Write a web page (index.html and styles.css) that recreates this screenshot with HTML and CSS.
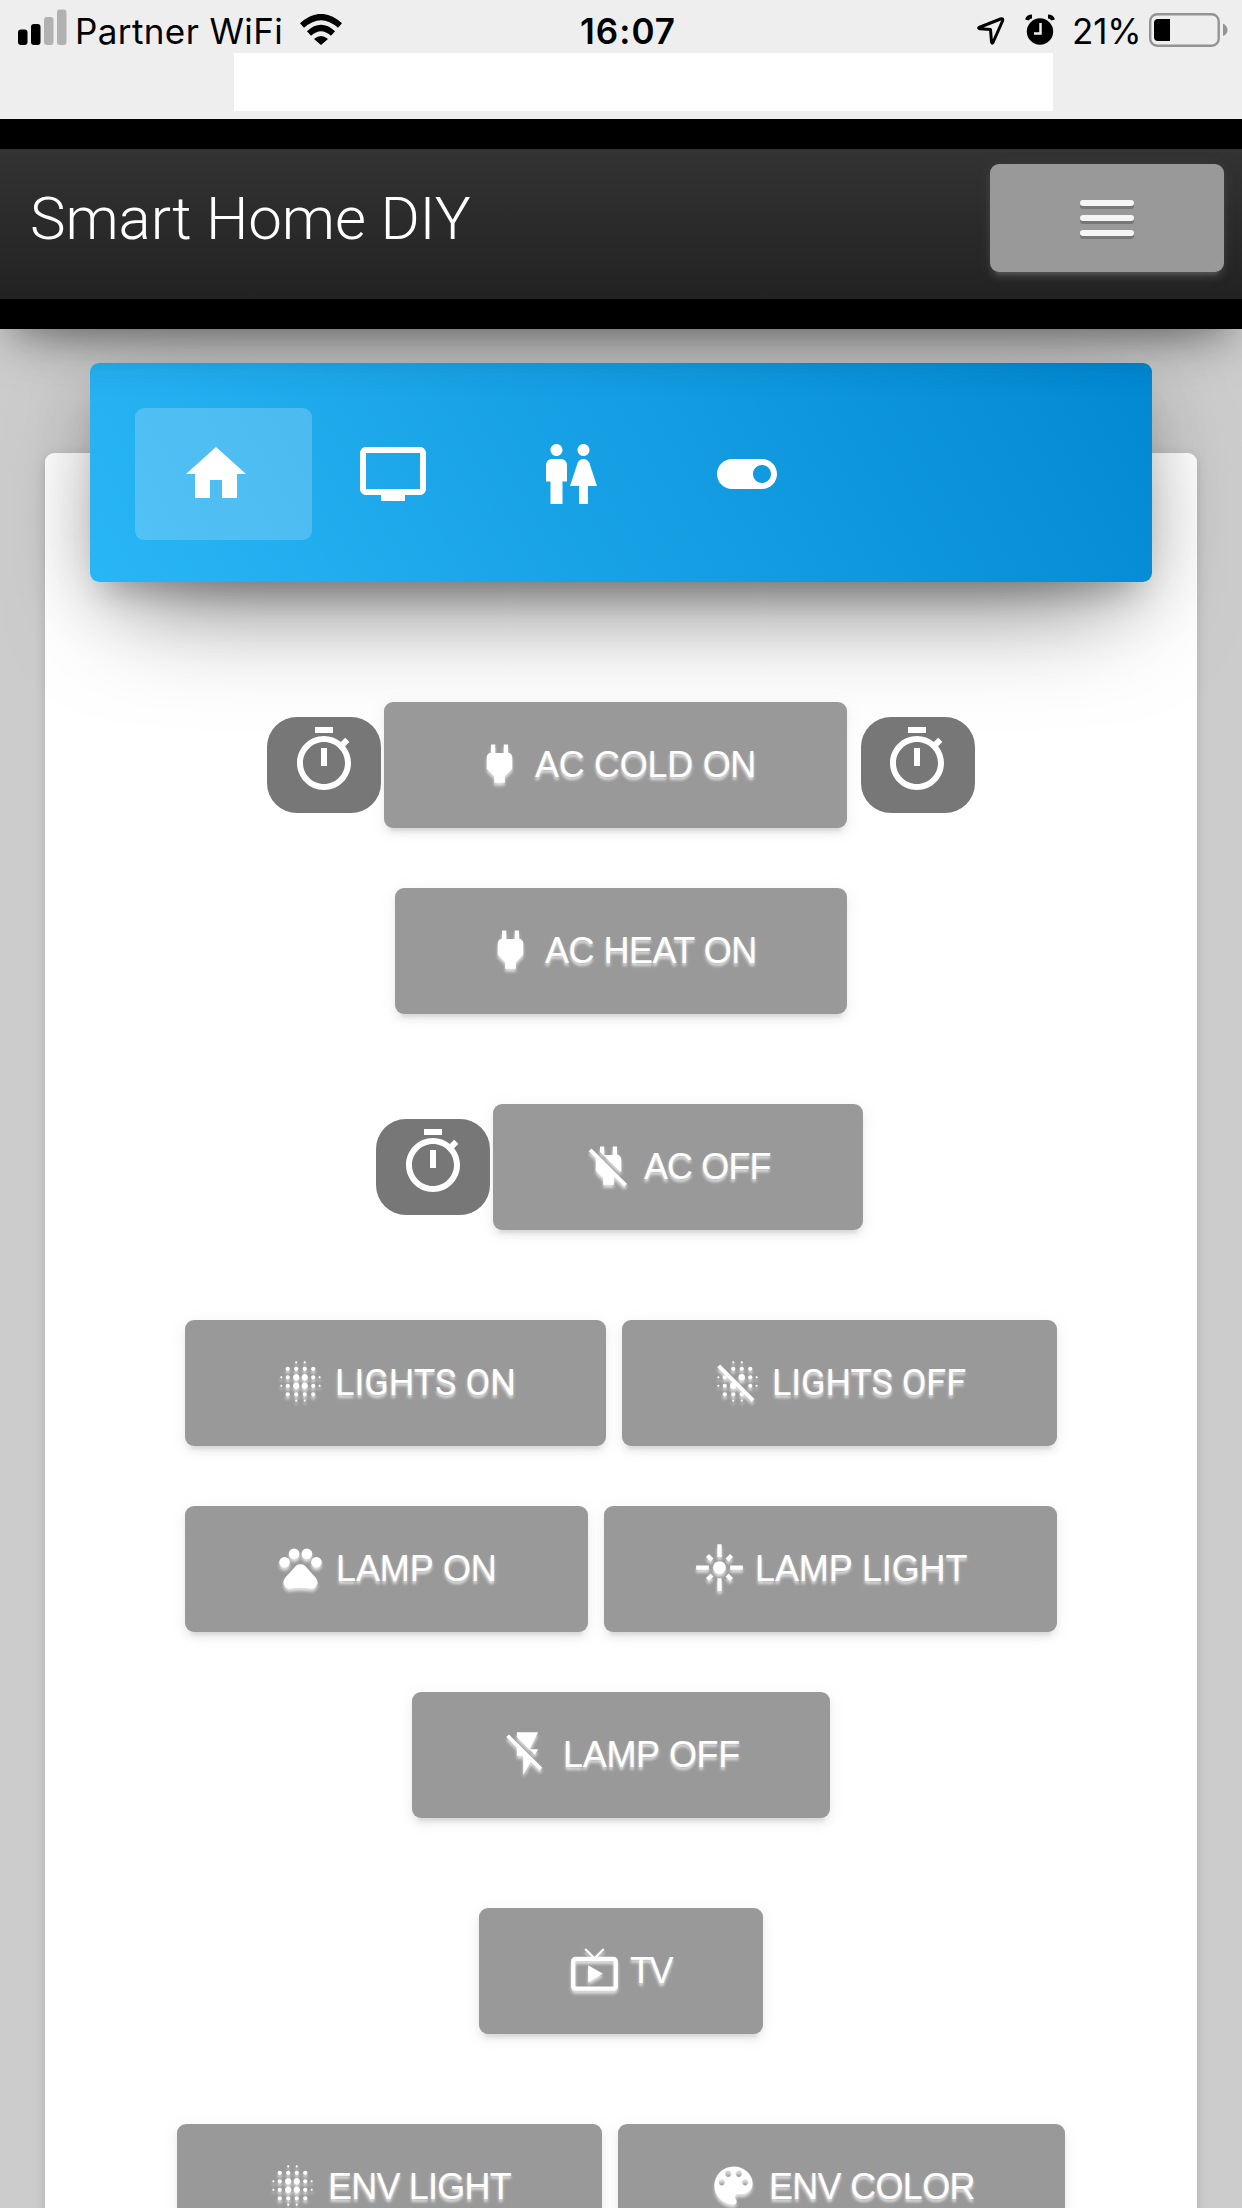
FILE: index.html
```html
<!DOCTYPE html>
<html lang="en">
<head>
<meta charset="utf-8">
<title>Smart Home DIY</title>
<link rel="stylesheet" href="styles.css">
</head>
<body>
<svg class="sprite" width="0" height="0" aria-hidden="true">
  <symbol id="timer" viewBox="0 0 24 24"><path d="M15 1H9v2h6V1zm-4 13h2V8h-2v6zm8.030-6.610l1.420-1.420c-.43-.51-.9-.99-1.410-1.410l-1.420 1.420C16.070 4.740 14.120 4 12 4c-4.970 0-9 4.030-9 9s4.020 9 9 9 9-4.030 9-9c0-2.120-.74-4.070-1.970-5.610zM12 20c-3.870 0-7-3.130-7-7s3.130-7 7-7 7 3.130 7 7-3.130 7-7 7z"/></symbol>
  <symbol id="power" viewBox="0 0 24 24"><path d="M16.010 7L16 3h-2v4h-4V3H8v4h-.01C7 6.990 6 7.990 6 8.990v5.490L9.500 18v3h5v-3l3.500-3.510v-5.500c0-1-1-2-1.990-1.990z"/></symbol>
  <symbol id="power-off" viewBox="0 0 24 24"><path d="M18 14.490V9c0-1-1.010-2.010-2-2V3h-2v4h-4V3H8v2.480l9.510 9.500.49-.49zm-1.760 1.770L7.200 7.200l-.01.010L3.980 4 2.710 5.250l3.360 3.360C6.040 8.740 6 8.870 6 9v5.480L9.500 18v3h5v-3l.48-.48L19.450 22l1.260-1.280-4.470-4.460z"/></symbol>
  <symbol id="blur-on" viewBox="0 0 24 24"><path d="M6 13c-.55 0-1 .45-1 1s.45 1 1 1 1-.45 1-1-.45-1-1-1zm0 4c-.55 0-1 .45-1 1s.45 1 1 1 1-.45 1-1-.45-1-1-1zm0-8c-.55 0-1 .45-1 1s.45 1 1 1 1-.45 1-1-.45-1-1-1zm-3 .5c-.28 0-.5.220-.5.500s.220.500.500.500.500-.22.500-.5-.22-.5-.5-.5zM6 5c-.55 0-1 .45-1 1s.45 1 1 1 1-.45 1-1-.45-1-1-1zm15 5.500c.28 0 .5-.22.500-.5s-.22-.5-.5-.5-.5.220-.5.500.220.500.500.500zM14 7c.55 0 1-.45 1-1s-.45-1-1-1-1 .45-1 1 .45 1 1 1zm0-3.500c.28 0 .5-.22.500-.5s-.22-.5-.5-.5-.5.220-.5.500.220.500.500.500zm-11 10c-.28 0-.5.220-.5.500s.220.500.500.500.500-.22.500-.5-.22-.5-.5-.5zm7 7c-.28 0-.5.220-.5.500s.220.500.500.500.500-.22.500-.5-.22-.5-.5-.5zm0-17c.28 0 .5-.22.500-.5s-.22-.5-.5-.5-.5.220-.5.500.220.500.500.500zM10 7c.55 0 1-.45 1-1s-.45-1-1-1-1 .45-1 1 .45 1 1 1zm0 5.500c-.83 0-1.500.67-1.500 1.500s.67 1.500 1.500 1.500 1.500-.67 1.500-1.500-.67-1.500-1.500-1.500zm8 .5c-.55 0-1 .45-1 1s.45 1 1 1 1-.45 1-1-.45-1-1-1zm0 4c-.55 0-1 .45-1 1s.45 1 1 1 1-.45 1-1-.45-1-1-1zm0-8c-.55 0-1 .45-1 1s.45 1 1 1 1-.45 1-1-.45-1-1-1zm0-4c-.55 0-1 .45-1 1s.45 1 1 1 1-.45 1-1-.45-1-1-1zm3 8.500c-.28 0-.5.220-.5.500s.220.500.500.500.500-.22.500-.5-.22-.5-.5-.5zM14 17c-.55 0-1 .45-1 1s.45 1 1 1 1-.45 1-1-.45-1-1-1zm0 3.500c-.28 0-.5.220-.5.500s.220.500.500.500.500-.22.500-.5-.22-.5-.5-.5zm-4-12c-.83 0-1.500.67-1.500 1.500s.67 1.500 1.500 1.500 1.500-.67 1.500-1.500-.67-1.500-1.500-1.500zm0 8.500c-.55 0-1 .45-1 1s.45 1 1 1 1-.45 1-1-.45-1-1-1zm4-4.500c-.83 0-1.500.67-1.500 1.500s.67 1.500 1.500 1.500 1.500-.67 1.500-1.500-.67-1.500-1.500-1.500zm0-4c-.83 0-1.500.67-1.500 1.500s.67 1.500 1.500 1.500 1.500-.67 1.500-1.500-.67-1.500-1.500-1.500z"/></symbol>
  <symbol id="blur-off" viewBox="0 0 24 24">
    <g><circle cx="10" cy="3" r=".5"/><circle cx="14" cy="3" r=".5"/><circle cx="10" cy="6" r="1"/><circle cx="14" cy="6" r="1"/><circle cx="18" cy="6" r="1"/><circle cx="3" cy="10" r=".5"/><circle cx="6" cy="10" r="1"/><circle cx="14" cy="10" r="1.500"/><circle cx="18" cy="10" r="1"/><circle cx="21" cy="10" r=".5"/><circle cx="3" cy="14" r=".5"/><circle cx="6" cy="14" r="1"/><circle cx="10" cy="14" r="1.500"/><circle cx="18" cy="14" r="1"/><circle cx="21" cy="14" r=".5"/><circle cx="6" cy="18" r="1"/><circle cx="10" cy="18" r="1"/><circle cx="14" cy="18" r="1"/><circle cx="10" cy="21" r=".5"/><circle cx="14" cy="21" r=".5"/></g>
    <path d="M2.500 5.270L3.780 4 20 20.230 18.730 21.500z"/></symbol>
  <symbol id="pets" viewBox="0 0 24 24"><circle cx="4.500" cy="9.500" r="2.500"/><circle cx="9" cy="5.500" r="2.500"/><circle cx="15" cy="5.500" r="2.500"/><circle cx="19.500" cy="9.500" r="2.500"/><path d="M17.340 14.860c-.87-1.020-1.600-1.890-2.480-2.910-.46-.54-1.050-1.080-1.750-1.320-.11-.04-.22-.07-.33-.09-.25-.04-.52-.04-.78-.04s-.53 0-.79.050c-.11.020-.22.050-.33.090-.7.240-1.280.78-1.750 1.320-.87 1.020-1.600 1.890-2.480 2.910-1.310 1.310-2.920 2.760-2.620 4.790.29 1.020 1.020 2.030 2.330 2.320.73.150 3.060-.44 5.540-.44h.18c2.480 0 4.810.58 5.540.44 1.310-.29 2.040-1.310 2.330-2.320.31-2.040-1.300-3.490-2.610-4.800z"/></symbol>
  <symbol id="flare" viewBox="0 0 24 24"><path d="M7 11H1v2h6v-2zm2.170-3.240L7.050 5.640 5.640 7.050l2.120 2.120 1.410-1.410zM13 1h-2v6h2V1zm5.360 6.050l-1.410-1.410-2.120 2.120 1.410 1.410 2.120-2.120zM17 11v2h6v-2h-6zm-5-2c-1.660 0-3 1.340-3 3s1.340 3 3 3 3-1.340 3-3-1.340-3-3-3zm2.830 7.240l2.120 2.120 1.410-1.410-2.120-2.120-1.410 1.410zm-9.190.71l1.410 1.410 2.120-2.120-1.410-1.410-2.120 2.120zM11 23h2v-6h-2v6z"/></symbol>
  <symbol id="flash-off" viewBox="0 0 24 24"><path d="M3.270 3L2 4.270l5 5V13h3v9l3.580-6.140L17.730 20 19 18.730 3.270 3zM17 10h-4l4-8H7v2.180l8.460 8.460L17 10z"/></symbol>
  <symbol id="live-tv" viewBox="0 0 24 24"><path d="M21 6h-7.590l3.290-3.290L16 2l-4 4-4-4-.7.710L10.590 6H3c-1.100 0-2 .89-2 2v12c0 1.100.9 2 2 2h18c1.100 0 2-.9 2-2V8c0-1.110-.9-2-2-2zm0 14H3V8h18v12zM9 10v8l7-4z"/></symbol>
  <symbol id="palette" viewBox="0 0 24 24"><path d="M12 3c-4.970 0-9 4.030-9 9s4.030 9 9 9c.83 0 1.500-.67 1.500-1.500 0-.39-.15-.74-.39-1.010-.23-.26-.38-.61-.38-.99 0-.83.67-1.500 1.500-1.500H16c2.760 0 5-2.240 5-5 0-4.420-4.030-8-9-8zm-5.500 9c-.83 0-1.500-.67-1.500-1.500S5.670 9 6.500 9 8 9.670 8 10.500 7.330 12 6.500 12zm3-4C8.670 8 8 7.330 8 6.500S8.670 5 9.500 5s1.500.67 1.500 1.500S10.330 8 9.500 8zm5 0c-.83 0-1.500-.67-1.500-1.500S13.670 5 14.500 5s1.500.67 1.500 1.500S15.330 8 14.500 8zm3 4c-.83 0-1.500-.67-1.500-1.500S16.670 9 17.500 9s1.500.67 1.500 1.500-.67 1.500-1.500 1.500z"/></symbol>
</svg>

<div class="status">
  <div class="status-left">
    <svg class="signal" width="49" height="36" viewBox="0 0 49 36"><rect y="20.500" width="9.500" height="15.500" rx="3"/><rect x="13" y="15" width="9.500" height="21" rx="3"/><g fill="#b1b1b1"><rect x="26" y="8" width="9.500" height="28" rx="3"/><rect x="39" y="0.500" width="9.500" height="35.500" rx="3"/></g></svg>
    <span class="carrier">Partner WiFi</span>
    <svg class="wifi" width="42" height="31" viewBox="0 0 42 31"><g fill="none" stroke="#000" stroke-width="6"><path d="M2 11.500Q21-5.500 40 11.500"/><path d="M9 19.500Q21 8.500 33 19.500"/></g><path d="M14 25Q21 19 28 25L21 31z"/></svg>
  </div>
  <span class="time">16:07</span>
  <div class="status-right">
    <svg width="28" height="34" viewBox="0 0 28 34"><path d="M2 15.500L23.500 7Q26.500 6 25.500 9L16 30.500Q15 32 14.500 30L13.500 17.500 3 16.800Q1 16 2 15.500z" transform="translate(0 -1)" fill="none" stroke="#000" stroke-width="3" stroke-linejoin="round"/></svg>
    <svg class="alarm" width="30" height="34" viewBox="0 0 30 34"><circle cx="15" cy="17.500" r="13.200"/><g fill="none" stroke="#000" stroke-width="4"><path d="M2 6Q3 2.500 7 2.500M28 6Q27 2.500 23 2.500"/></g><path d="M15.500 9v10.500H9" fill="none" stroke="#eee" stroke-width="2.500"/></svg>
    <span class="percent">21%</span>
    <svg class="battery" width="79" height="34" viewBox="0 0 79 34"><rect x="1.200" y="1.200" width="68.500" height="31.500" rx="7" fill="none" stroke="#939393" stroke-width="2.400"/><path d="M9 6h12v22H9q-4 0-4-4V10q0-4 4-4z"/><path d="M74 10.500q4.500 2.500 4.500 6.500T74 23z" fill="#939393"/></svg>
  </div>
</div>
<div class="address"><div class="address-field"></div></div>

<header class="navbar">
  <h1 class="brand">Smart Home DIY</h1>
  <button class="toggler" aria-label="Menu"><i></i><i></i><i></i></button>
</header>

<main class="card">
  <nav class="tabs">
    <a class="tab active"><svg viewBox="0 0 24 24"><path d="M10 20v-6h4v6h5v-8h3L12 3 2 12h3v8z"/></svg></a>
    <a class="tab"><svg viewBox="0 0 24 24"><path d="M21 3H3c-1.100 0-2 .9-2 2v12c0 1.100.9 2 2 2h5v2h8v-2h5c1.100 0 2-.9 2-2V5c0-1.100-.9-2-2-2zm0 14H3V5h18v12z"/></svg></a>
    <a class="tab"><svg viewBox="0 0 24 24"><path d="M5.500 22v-7.500H4V9c0-1.100.9-2 2-2h3c1.100 0 2 .9 2 2v5.500H9.500V22h-4zM18 22v-6h3l-2.540-7.630C18.180 7.550 17.420 7 16.560 7h-.12c-.86 0-1.630.55-1.900 1.370L12 16h3v6h3zM7.500 6c1.110 0 2-.89 2-2s-.89-2-2-2-2 .89-2 2 .89 2 2 2zm9 0c1.110 0 2-.89 2-2s-.89-2-2-2-2 .89-2 2 .89 2 2 2z"/></svg></a>
    <a class="tab"><svg viewBox="0 0 24 24"><path d="M17 7H7c-2.760 0-5 2.240-5 5s2.240 5 5 5h10c2.760 0 5-2.240 5-5s-2.240-5-5-5zm0 8c-1.660 0-3-1.340-3-3s1.340-3 3-3 3 1.340 3 3-1.340 3-3 3z"/></svg></a>
  </nav>
  <div class="controls">
    <div class="row first">
      <button class="timer" aria-label="Timer"><svg><use href="#timer"/></svg></button>
      <button class="btn ac-cold"><svg><use href="#power"/></svg><span>AC COLD ON</span></button>
      <button class="timer after" aria-label="Timer"><svg><use href="#timer"/></svg></button>
    </div>
    <div class="row">
      <button class="btn ac-heat"><svg><use href="#power"/></svg><span>AC HEAT ON</span></button>
    </div>
    <div class="row spaced ac-off-row">
      <button class="timer" aria-label="Timer"><svg><use href="#timer"/></svg></button>
      <button class="btn ac-off"><svg><use href="#power-off"/></svg><span>AC OFF</span></button>
    </div>
    <div class="row spaced pair">
      <button class="btn lights-on"><svg><use href="#blur-on"/></svg><span>LIGHTS ON</span></button>
      <button class="btn lights-off"><svg><use href="#blur-off"/></svg><span>LIGHTS OFF</span></button>
    </div>
    <div class="row pair">
      <button class="btn lamp-on"><svg><use href="#pets"/></svg><span>LAMP ON</span></button>
      <button class="btn lamp-light"><svg><use href="#flare"/></svg><span>LAMP LIGHT</span></button>
    </div>
    <div class="row">
      <button class="btn lamp-off"><svg><use href="#flash-off"/></svg><span>LAMP OFF</span></button>
    </div>
    <div class="row spaced">
      <button class="btn tv"><svg><use href="#live-tv"/></svg><span>TV</span></button>
    </div>
    <div class="row spaced pair">
      <button class="btn env-light"><svg><use href="#blur-on"/></svg><span>ENV LIGHT</span></button>
      <button class="btn env-color"><svg><use href="#palette"/></svg><span>ENV COLOR</span></button>
    </div>
  </div>
</main>
</body>
</html>
```

FILE: styles.css
```css
* { box-sizing: border-box; }
html, body { height: 100%; }
body {
  margin: 0;
  overflow: hidden;
  display: flex;
  flex-direction: column;
  background: #ccc;
  font-family: "Liberation Sans", Arial, sans-serif;
}
svg { display: block; flex: none; }
button { border: 0; margin: 0; padding: 0; font: inherit; }
.sprite { position: absolute; }

.status, .address { position: relative; z-index: 3; flex: none; background: #eee; }
.status {
  height: 53px;
  display: grid;
  grid-template-columns: 1fr auto 1fr;
  font-family: Inter, sans-serif;
  font-size: 35px;
  line-height: 62px;
  white-space: nowrap;
}
.status-left, .status-right { display: flex; align-items: flex-start; }
.status-left { padding-left: 18px; }
.signal { margin-top: 9px; }
.carrier { width: 208px; margin-left: 8px; letter-spacing: .4px; }
.wifi { margin: 14px 0 0 17px; }
.time { padding-left: 14px; font-weight: 600; letter-spacing: 1px; }
.status-right { justify-content: flex-end; padding-right: 14px; }
.status-right > svg { margin-top: 13px; }
.status-right > .alarm { margin-top: 14px; margin-left: 20px; }
.percent { margin-left: 17px; width: 69px; letter-spacing: -.2px; }
.status-right > .battery { margin-left: 8px; }

.address { height: 66px; padding: 0 189px 8px 234px; }
.address-field { height: 58px; background: #fff; }

.navbar {
  flex: none;
  position: relative;
  z-index: 2;
  height: 210px;
  display: flex;
  justify-content: space-between;
  align-items: flex-start;
  padding: 15px 18px 0 30px;
  border: solid #000;
  border-width: 30px 0;
  background: linear-gradient(#333, #222);
  box-shadow: 0 30px 60px -36px rgba(0,0,0,.42), 0 9px 60px rgba(0,0,0,.12), 0 24px 30px -15px rgba(0,0,0,.2);
}
.brand {
  margin: 0;
  font: 300 60px/110px Roboto, sans-serif;
  letter-spacing: -.1px;
  color: #fff;
}
.toggler, .btn {
  background: #999;
  border-radius: 9px;
  box-shadow: 0 6px 6px rgba(153,153,153,.14), 0 9px 3px -6px rgba(153,153,153,.2), 0 3px 15px rgba(153,153,153,.12);
}
.toggler {
  width: 234px;
  height: 108px;
  display: flex;
  flex-direction: column;
  justify-content: center;
  align-items: center;
  gap: 9px;
}
.toggler i { width: 54px; height: 6px; border-radius: 3px; background: #f5f5f5; box-shadow: 0 3px 0 #777; }

.card {
  flex: none;
  height: 1900px;
  margin: 124px 45px 0;
  padding: 0 45px;
  background: #fff;
  border-radius: 9px;
  box-shadow: 0 3px 12px rgba(0,0,0,.14);
}
.tabs {
  display: flex;
  height: 219px;
  margin-top: -90px;
  padding: 45px;
  border-radius: 9px;
  background: linear-gradient(60deg, #29b6f6, #0288d1);
  box-shadow: 0 48px 114px -36px rgba(0,0,0,.56), 0 12px 75px rgba(0,0,0,.12), 0 24px 30px -15px rgba(0,0,0,.2);
}
.tab { width: 177px; height: 132px; padding: 30px 45px; border-radius: 9px; }
.tab.active { background: rgba(255,255,255,.2); }
.tab svg { width: 72px; height: 72px; fill: #fff; }

.controls { padding-top: 120px; }
.row { display: flex; justify-content: center; align-items: center; margin-top: 60px; }
.row.first { margin-top: 0; }
.row.spaced { margin-top: 90px; }
.row.pair { gap: 16px; }
.ac-off-row { padding-right: 3px; }

.timer { width: 114px; height: 96px; margin-right: 3px; padding: 7px 21px 17px; border-radius: 30px; background: #777; }
.timer.after { margin: 0 0 0 14px; padding: 7px 22px 17px 20px; }
.timer svg { width: 72px; height: 72px; fill: #fff; }

.btn {
  height: 126px;
  display: flex;
  padding: 36px 0 0 90px;
  gap: 10px;
  color: #fff;
  font-size: 36px;
  line-height: 54px;
  text-align: left;
  white-space: nowrap;
  text-shadow: 0 3px 3px rgba(255,255,255,.7);
}
.btn svg { width: 51px; height: 51px; fill: #fff; filter: drop-shadow(0 3px 1.500px rgba(255,255,255,.7)); }
.ac-cold { width: 463px; letter-spacing: -.3px; }
.ac-heat { width: 452px; gap: 9px; letter-spacing: -.5px; }
.ac-off { width: 370px; letter-spacing: -.9px; }
.lights-on, .lights-off { gap: 9px; line-height: 55px; font-family: Roboto, sans-serif; }
.lights-on { width: 421px; }
.lights-off { width: 435px; letter-spacing: -.1px; }
.lamp-on { width: 403px; letter-spacing: -.1px; }
.lamp-light { width: 453px; letter-spacing: -.1px; }
.lamp-off { width: 418px; letter-spacing: -.3px; }
.tv { width: 284px; letter-spacing: -2.500px; }
.env-light { width: 425px; letter-spacing: -.8px; }
.env-color { width: 447px; letter-spacing: -.7px; }
```
